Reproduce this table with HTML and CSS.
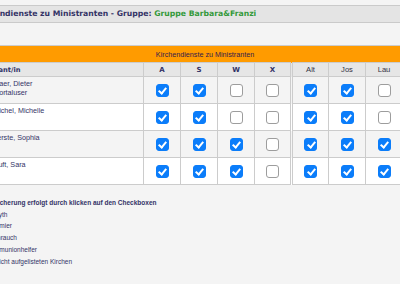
FILE: index.html
```html
<!DOCTYPE html>
<html>
<head>
  <meta charset="utf-8">
  <meta name="viewport" content="width=device-width,initial-scale=1.0">
  <title>Kirchendienste</title>
  <link rel="stylesheet" href="styles.css">
</head>
<body>
  <div class="page">
    <div class="titlebar">
      <span class="title">Kirchendienste zu Ministranten - Gruppe: </span><span class="group">Gruppe Barbara&amp;Franzi</span>
    </div>

    <table class="plan">
      <colgroup>
        <col class="col-name">
        <col span="8" class="col-day">
      </colgroup>
      <tr class="caption">
        <th colspan="9">Kirchendienste zu Ministranten</th>
      </tr>
      <tr class="head">
        <th class="name">Ministrant/in</th>
        <th class="svc">A</th>
        <th class="svc">S</th>
        <th class="svc">W</th>
        <th class="svc">X</th>
        <th class="church sep">Alt</th>
        <th class="church">Jos</th>
        <th class="church">Lau</th>
        <th class="church">Mar</th>
      </tr>
      <tr>
        <td class="name">Grossmaer, Dieter<br>Rolle: Portaluser</td>
        <td><input type="checkbox" checked></td>
        <td><input type="checkbox" checked></td>
        <td><input type="checkbox"></td>
        <td><input type="checkbox"></td>
        <td class="sep"><input type="checkbox" checked></td>
        <td><input type="checkbox" checked></td>
        <td><input type="checkbox"></td>
        <td><input type="checkbox" checked></td>
      </tr>
      <tr>
        <td class="name">Brandmichel, Michelle</td>
        <td><input type="checkbox" checked></td>
        <td><input type="checkbox" checked></td>
        <td><input type="checkbox"></td>
        <td><input type="checkbox"></td>
        <td class="sep"><input type="checkbox" checked></td>
        <td><input type="checkbox" checked></td>
        <td><input type="checkbox"></td>
        <td><input type="checkbox"></td>
      </tr>
      <tr>
        <td class="name">Krammerste, Sophia</td>
        <td><input type="checkbox" checked></td>
        <td><input type="checkbox" checked></td>
        <td><input type="checkbox" checked></td>
        <td><input type="checkbox"></td>
        <td class="sep"><input type="checkbox" checked></td>
        <td><input type="checkbox" checked></td>
        <td><input type="checkbox" checked></td>
        <td><input type="checkbox" checked></td>
      </tr>
      <tr>
        <td class="name">Steinhauft, Sara</td>
        <td><input type="checkbox" checked></td>
        <td><input type="checkbox" checked></td>
        <td><input type="checkbox" checked></td>
        <td><input type="checkbox"></td>
        <td class="sep"><input type="checkbox" checked></td>
        <td><input type="checkbox" checked></td>
        <td><input type="checkbox" checked></td>
        <td><input type="checkbox"></td>
      </tr>
    </table>

    <ul class="legend">
      <li class="note">Speicherung erfolgt durch klicken auf den Checkboxen</li>
      <li>Akolyth</li>
      <li>Sommier</li>
      <li>Weihrauch</li>
      <li>Kommunionhelfer</li>
      <li>An nicht aufgelisteten Kirchen</li>
    </ul>
  </div>
</body>
</html>
```

FILE: styles.css
```css
html, body { overflow: hidden; }
body {
  margin: 0;
  background: #f4f4f4;
  font-family: "Liberation Sans", Arial, sans-serif;
  color: #333366;
}

/* seite ist etwas nach links geschoben */
.page { margin-left: -30px; }

.titlebar {
  margin-top: 5px;
  height: 16px;
  line-height: 16px;
  padding-left: 2px;
  background: #e4e4e4;
  border-top: 1px solid #cacaca;
  border-bottom: 1px solid #cacaca;
  font-family: "DejaVu Sans", Verdana, sans-serif;
  font-weight: bold;
  font-size: 7.7px;
  white-space: nowrap;
}
.titlebar .title { color: #333366; }
.titlebar .group { color: #33993a; }

.plan {
  margin-top: 22px;
  width: 469px;
  table-layout: fixed;
  border-collapse: collapse;
  font-size: 7.2px;
}
.col-name { width: 173px; }
.col-day { width: 37px; }

.plan th, .plan td {
  border: 1px solid #cccccc;
  padding: 0;
}
.plan .sep { border-left: 3px double #cccccc; }

.caption th {
  height: 16px;
  background: #ff9b00;
  font-weight: normal;
  color: #33204f;
  text-align: center;
}

.head th {
  height: 13px;
  background: #e6e6e6;
  text-align: center;
}
.head th.name {
  text-align: left;
  padding-left: 1px;
}
.head .name, .head .svc {
  font-family: "DejaVu Sans", Verdana, sans-serif;
  font-weight: bold;
  font-size: 6.7px;
}
.head .svc { font-size: 7px; }
.head .church {
  font-weight: normal;
  font-size: 7.6px;
  color: #333344;
}

.plan td {
  height: 26px;
  text-align: center;
  vertical-align: middle;
}
.plan tr:nth-child(odd) td { background: #f4f4f4; }
.plan tr:nth-child(even) td { background: #ffffff; }

.plan td.name {
  height: 23px;
  text-align: left;
  vertical-align: top;
  padding: 3px 0 0 3px;
  line-height: 8.5px;
  white-space: nowrap;
  overflow: hidden;
}

.plan input[type="checkbox"] {
  appearance: none;
  -webkit-appearance: none;
  position: relative;
  box-sizing: border-box;
  width: 13px;
  height: 13px;
  margin: 0;
  vertical-align: middle;
  background: #fff;
  border: 1px solid #9d9d9d;
  border-radius: 3px;
}
.plan input[type="checkbox"]:checked {
  background: #0b7dfa;
  border-color: #0b7dfa;
}
.plan input[type="checkbox"]:checked::after {
  content: "";
  position: absolute;
  left: 3.5px;
  top: 1px;
  width: 3px;
  height: 6px;
  border: solid #fff;
  border-width: 0 2px 2px 0;
  transform: rotate(40deg);
}

.legend {
  list-style: none;
  margin: 12px 0 0;
  padding-left: 16px;
  font-size: 6.5px;
  line-height: 11.7px;
  color: #333366;
}
.legend .note { font-weight: bold; }
```
